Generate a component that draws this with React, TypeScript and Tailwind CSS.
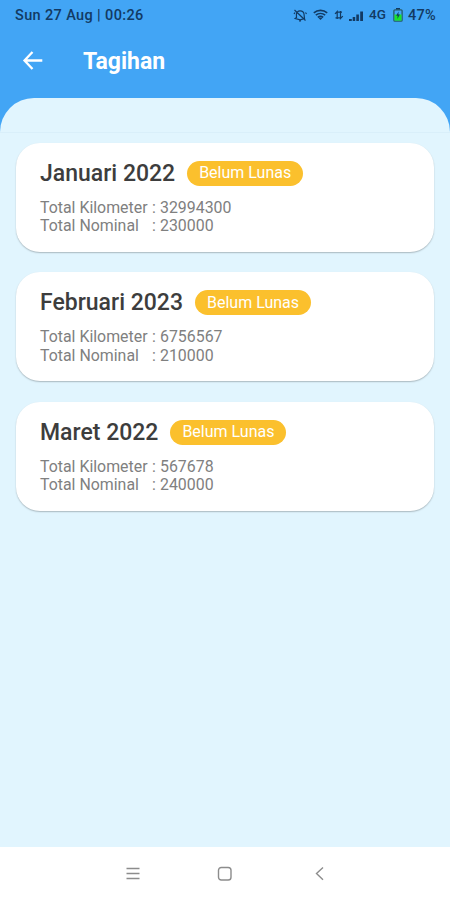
interface Tagihan {
  bulan: string;
  kilometer: string;
  nominal: string;
}

const daftarTagihan: Tagihan[] = [
  { bulan: "Januari 2022", kilometer: "32994300", nominal: "230000" },
  { bulan: "Februari 2023", kilometer: "6756567", nominal: "210000" },
  { bulan: "Maret 2022", kilometer: "567678", nominal: "240000" },
];

function StatusBar() {
  return (
    <div className="flex h-[30px] items-center pl-[15px] pr-[14px] text-[14.5px] leading-none font-medium text-[#123a63]">
      <span className="pt-[2px] tracking-[0.37px]">Sun 27 Aug | 00:26</span>
      <div className="ml-auto flex items-center">
        {/* Bell off */}
        <svg width="14" height="14" viewBox="0 0 14 14" fill="none" stroke="currentColor" strokeWidth="1.2" className="mr-[6px]">
          <path d="M3.5 9.5L2.2 10.500l5 1.300 4.300-1.300-.5-4.500c-.3-2-2-3.300-4-3.200S3.300 4.300 3.400 6.300zM1.500 2l11 10.500M2 4.500L1 6M12.500 4.500l1 1.500M6 13h2" />
        </svg>
        {/* Wifi */}
        <svg width="15" height="12" viewBox="0 0 15 12" fill="none" stroke="currentColor" strokeWidth="1.6" className="mr-[6px]">
          <path d="M.8 3.8c3.8-3.2 9.6-3.2 13.4 0M2.8 6.2c2.7-2.2 6.7-2.2 9.400 0M4.8 8.4c1.6-1.3 3.8-1.3 5.4 0" />
          <path d="M5.3 8.8L7.5 11l2.2-2.2z" fill="currentColor" stroke="none" />
        </svg>
        {/* Data arrows */}
        <svg width="10" height="10" viewBox="0 0 10 10" fill="none" stroke="currentColor" strokeWidth="1.2" className="mr-[5px]">
          <path d="M3.2 9V1.5L1 3.8M6.500 1v7.500L8.800 6.200M3 2.200h5M1.500 7.800h5" />
        </svg>
        {/* Signal */}
        <svg width="15" height="11" viewBox="0 0 15 11" fill="currentColor" className="mr-[5px]">
          <path d="M0 9h2.8v2H0zM3.7 7h2.5v4H3.7zM7.3 4.5h2.6V11H7.3zM11.200 1.5H14V11h-2.800z" />
        </svg>
        <span className="mr-[7px] text-[13.5px]">4G</span>
        {/* Battery */}
        <svg width="10" height="14" viewBox="0 0 10 14" className="mr-[5px]">
          <path d="M3 0h4v2H3z" fill="#123a63" />
          <rect x=".9" y="1.8" width="8.2" height="11.4" rx="1" fill="#42a5f5" stroke="#245c68" strokeWidth="1.3" />
          <path d="M1.5 6.5h7v6.1h-7z" fill="#19e52b" />
          <path d="M5.7 3.5L3.1 7.8h1.6l-.4 3.1 2.6-4.3H5.3z" fill="#123a63" />
        </svg>
        <span className="pt-[2px] tracking-[0.3px]">47%</span>
      </div>
    </div>
  );
}

function TagihanCard({ bulan, kilometer, nominal }: Tagihan) {
  return (
    <div className="h-[109px] rounded-[24px] bg-white pt-[18px] pl-6 shadow-[0_1px_1.5px_rgba(0,0,0,0.25)]">
      <div className="flex h-[25px] items-center gap-3">
        <h2 className="text-[23px] leading-[25px] font-medium text-[#3d3d3d]">{bulan}</h2>
        <span className="flex h-[25px] w-[116px] items-center justify-center rounded-full bg-[#fbc02d] text-[16px] leading-none text-white">
          Belum Lunas
        </span>
      </div>
      <div className="mt-[13px] grid grid-cols-[112px_8px_auto] text-[15.9px] leading-[18.5px] text-[#808080]">
        <span>Total Kilometer</span>
        <span>:</span>
        <span>{kilometer}</span>
        <span>Total Nominal</span>
        <span>:</span>
        <span>{nominal}</span>
      </div>
    </div>
  );
}

export default function App() {
  return (
    <div className="flex h-[900px] w-[450px] flex-col overflow-hidden bg-[#42a5f5] font-['Roboto',sans-serif]">
      <StatusBar />

      <header className="flex h-[68px] items-center pb-[7px] pl-[22px] text-white">
        <svg width="22" height="22" viewBox="0 0 22 22" fill="none" stroke="currentColor" strokeWidth="2.3">
          <path d="M20.3 10.500H3M10.5 2L2.5 10.500l8 8.500" />
        </svg>
        <h1 className="ml-[39px] pt-[2px] text-[23px] leading-none font-bold">Tagihan</h1>
      </header>

      <main className="flex-1 rounded-t-[34px] bg-[#e1f5fe]">
        <div className="h-[35px] border-b border-[#d9effa]" />
        <div className="flex flex-col gap-[20.6px] px-4 pt-[9.5px]">
          {daftarTagihan.map((tagihan) => (
            <TagihanCard key={tagihan.bulan} {...tagihan} />
          ))}
        </div>
      </main>

      {/* Android navigation */}
      <nav className="flex h-[53px] items-center justify-between bg-white pr-[122px] pl-[125px] text-[#8c8c8c]">
        <svg width="16" height="16" viewBox="0 0 16 16" fill="none" stroke="currentColor" strokeWidth="1.4">
          <path d="M1.5 2.5h13M1.5 7.5h13M1.5 12.5h13" />
        </svg>
        <svg width="16" height="16" viewBox="0 0 16 16" fill="none" stroke="currentColor" strokeWidth="1.4" className="mr-[3px]">
          <rect x="1.5" y="1.5" width="12.5" height="12.5" rx="2.8" />
        </svg>
        <svg width="16" height="16" viewBox="0 0 16 16" fill="none" stroke="currentColor" strokeWidth="1.4">
          <path d="M11 1.5L4.5 7.5l6.5 6.3" />
        </svg>
      </nav>
    </div>
  );
}
